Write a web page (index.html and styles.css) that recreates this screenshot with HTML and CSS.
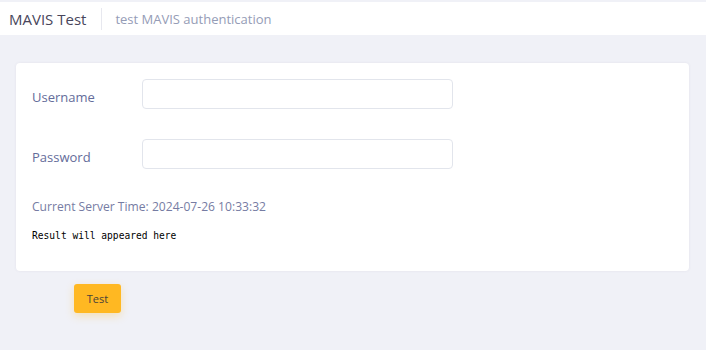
FILE: index.html
```html
<!DOCTYPE html>
<html lang="en">
<head>
  <meta charset="UTF-8">
  <title>MAVIS Test</title>
  <link rel="stylesheet" href="styles.css">
</head>
<body>
  <div class="subheader">
    <h3 class="subheader-title">MAVIS Test</h3>
    <span class="subheader-separator"></span>
    <span class="subheader-desc">test MAVIS authentication</span>
  </div>

  <div class="content">
    <form class="portlet">
      <div class="form-row">
        <label for="username">Username</label>
        <input type="text" id="username">
      </div>
      <div class="form-row">
        <label for="password">Password</label>
        <input type="password" id="password">
      </div>
      <div class="server-time">Current Server Time: 2024-07-26 10:33:32</div>
      <pre class="result">Result will appeared here</pre>
    </form>

    <div class="actions">
      <button type="button" class="btn-warning">Test</button>
    </div>
  </div>
</body>
</html>
```

FILE: styles.css
```css
body {
  margin: 0;
  font-family: "Open Sans", sans-serif;
  background: #f0f1f7;
  color: #646c9a;
}

.subheader {
  display: flex;
  align-items: center;
  height: 33px;
  margin-top: 2px;
  padding: 0 9px;
  background: #fff;
}

.subheader-title {
  margin: 0;
  font-size: 15px;
  font-weight: 500;
  color: #48465b;
}

.subheader-separator {
  width: 1px;
  height: 22px;
  margin: 0 13px 0 15px;
  background: #e7e8ef;
}

.subheader-desc {
  font-size: 13px;
  color: #959cb6;
}

.content {
  padding: 28px 17px 28px 16px;
}

.portlet {
  background: #fff;
  border-radius: 4px;
  box-shadow: 0 0 3px rgba(82, 63, 105, 0.08);
  padding: 16px 16px 30px;
}

.form-row {
  display: flex;
  align-items: center;
  margin-bottom: 30px;
}

.form-row label {
  width: 110px;
  padding-top: 6px;
  font-size: 13px;
  color: #646c9a;
}

.form-row input {
  width: 295px;
  height: 28px;
  padding: 0 7px;
  border: 1px solid #e2e5ec;
  border-radius: 4px;
}

.server-time {
  margin-top: -1px;
  font-size: 12.1px;
  color: #767ca3;
}

.result {
  margin: 15px 0 0;
  font-family: "DejaVu Sans Mono", monospace;
  font-size: 9.6px;
  color: #000;
}

.actions {
  padding: 13px 0 0 58px;
}

.btn-warning {
  width: 47px;
  height: 29px;
  border: 0;
  border-radius: 3px;
  background: #ffb822;
  color: #49433a;
  font-family: "Open Sans", sans-serif;
  font-size: 11px;
  box-shadow: 0 3px 8px rgba(255, 184, 34, 0.3);
}
```
